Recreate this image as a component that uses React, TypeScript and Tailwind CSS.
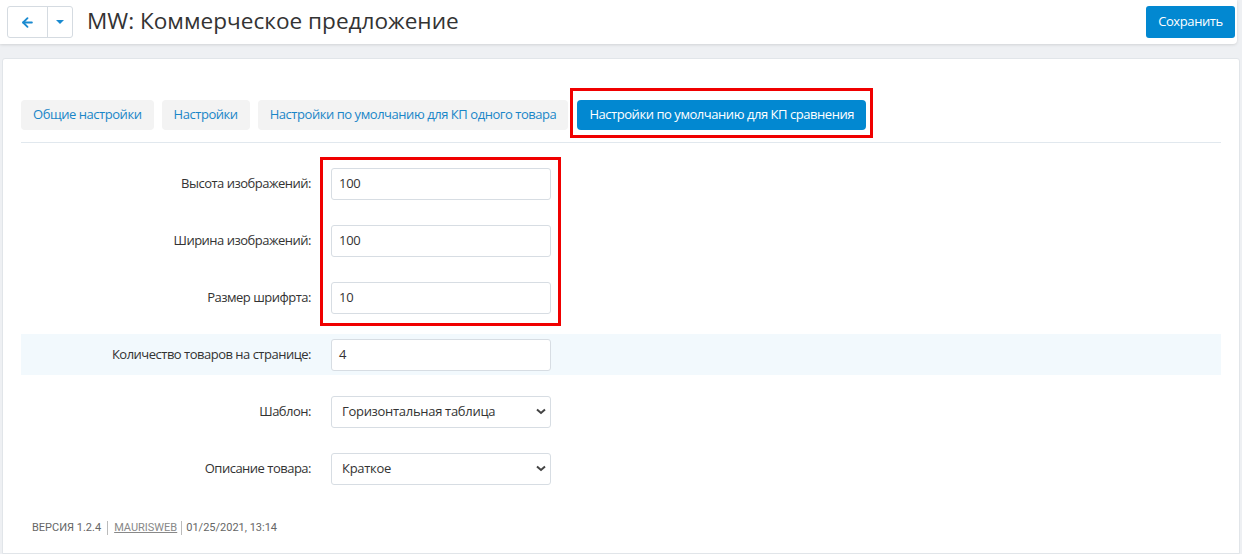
import { ArrowLeft } from 'lucide-react'

const ROWS = [
  { label: 'Высота изображений:', value: '100' },
  { label: 'Ширина изображений:', value: '100' },
  { label: 'Размер шрифрта:', value: '10' },
  { label: 'Количество товаров на странице:', value: '4', highlight: true },
  { label: 'Шаблон:', value: 'Горизонтальная таблица', select: true },
  { label: 'Описание товара:', value: 'Краткое', select: true },
]

const TABS = ['Общие настройки', 'Настройки', 'Настройки по умолчанию для КП одного товара']

function Chevron() {
  return (
    <svg width="10" height="7" viewBox="0 0 10 7" className="text-[#444]">
      <path d="M1 1.5 L5 5 L9 1.5" fill="none" stroke="currentColor" strokeWidth="2" />
    </svg>
  )
}

export default function App() {
  return (
    <div className="min-h-[554px] bg-[#eef0f3] font-['Open_Sans','Liberation_Sans',sans-serif] text-[#333]">
      {/* header */}
      <div className="mr-[5px] h-[44px] bg-white rounded-br-[4px] shadow-[0_1px_3px_rgba(0,0,0,0.12)] flex items-center pl-[7px] pr-[2px]">
        <div className="flex h-[32px] border border-[#d5dbe1] rounded-[3px] bg-white">
          <button className="w-[40px] flex items-center justify-center border-r border-[#d5dbe1]">
            <ArrowLeft className="w-[15px] h-[15px] text-[#1a8ad0]" strokeWidth={3} />
          </button>
          <button className="w-[24px] flex items-center justify-center">
            <span className="block w-0 h-0 border-l-[4px] border-r-[4px] border-t-[4px] border-l-transparent border-r-transparent border-t-[#1a8ad0]" />
          </button>
        </div>
        <h1 className="ml-[14px] text-[22.6px] leading-none text-[#333] mb-[2px]">MW: Коммерческое предложение</h1>
        <button className="ml-auto h-[32px] w-[89px] bg-[#0288d1] text-white text-[13px] tracking-[-0.4px] rounded-[3px]">Сохранить</button>
      </div>

      {/* content panel */}
      <div className="mt-[14px] ml-[2px] mr-[2px] min-h-[496px] bg-white border border-[#e1e5e9] rounded-t-[3px] px-[18px] pt-[41px]">
        <div className="relative flex gap-[8px] pb-[12px] border-b border-[#e1e8ee] text-[13px] tracking-[-0.45px]">
          {TABS.map((t) => (
            <button key={t} className="h-[30px] px-[12px] rounded-[4px] bg-[#f3f3f3] text-[#1a86c8]">
              {t}
            </button>
          ))}
          <button className="relative ml-[1px] h-[30px] px-[12px] rounded-[4px] bg-[#0288d1] text-white">
            Настройки по умолчанию для КП сравнения
            <span className="absolute -left-[7px] -right-[7px] -top-[12px] -bottom-[8px] border-[3px] border-[#f00000]" />
          </button>
        </div>

        <div className="relative mt-[20px] flex flex-col gap-[16px]">
          {ROWS.map((r) => (
            <div key={r.label} className={`flex items-center h-[41px] ${r.highlight ? 'bg-[#f2f9fd]' : ''}`}>
              <label className="w-[290px] text-right text-[13px] tracking-[-0.5px] text-[#333]">{r.label}</label>
              <div
                className={`ml-[20px] w-[220px] h-[32px] border border-[#d7dde3] rounded-[3px] bg-white flex items-center justify-between text-[13px] tracking-[-0.3px] text-[#333] ${
                  r.select ? 'pl-[10px] pr-[4px]' : 'px-[7px]'
                }`}
              >
                <span>{r.value}</span>
                {r.select && <Chevron />}
              </div>
            </div>
          ))}
          <span className="absolute left-[299px] top-[-6px] w-[241px] h-[169px] border-[3px] border-[#f00000]" />
        </div>

        <div className="mt-[31px] pl-[11px] flex items-center text-[11px] text-[#666] font-['Roboto','Liberation_Sans',sans-serif]">
          <span>ВЕРСИЯ 1.2.4</span>
          <span className="mx-[6px] h-[14px] border-l border-[#bbb]" />
          <span className="underline text-[#888]">MAURISWEB</span>
          <span className="mx-[4px] h-[14px] border-l border-[#bbb]" />
          <span>01/25/2021, 13:14</span>
        </div>
      </div>
    </div>
  )
}
